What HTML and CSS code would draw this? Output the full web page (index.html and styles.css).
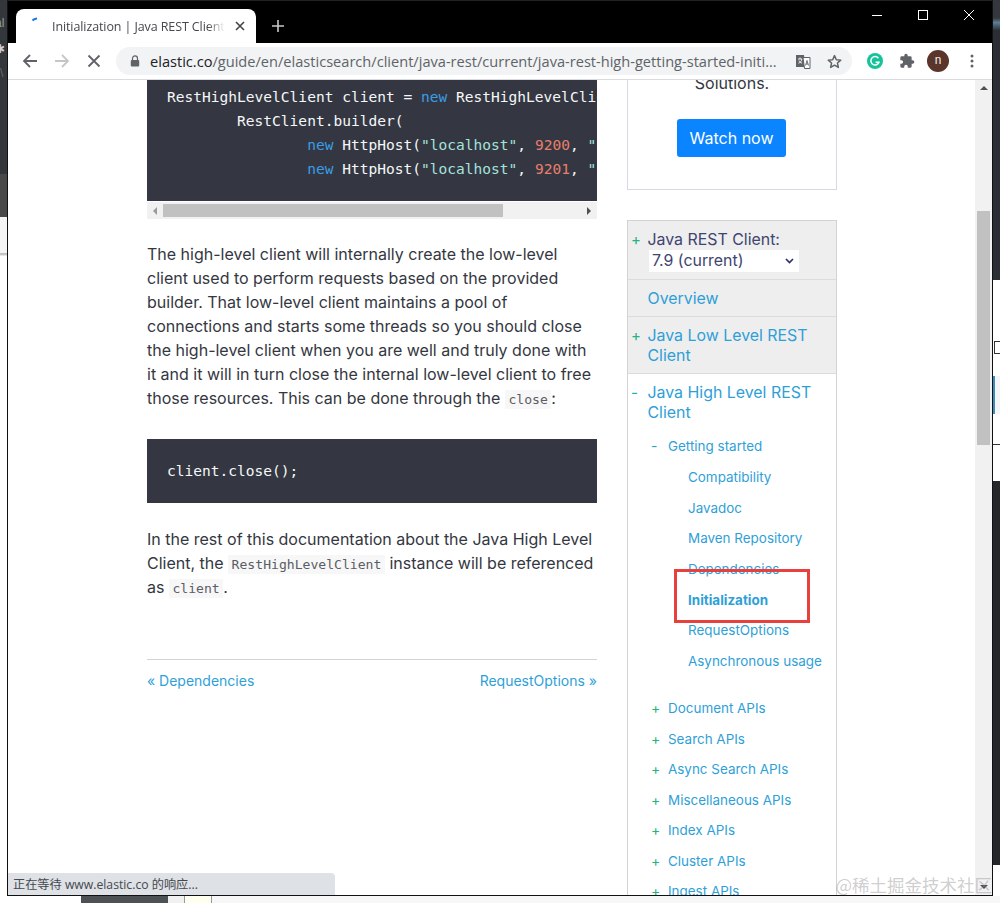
FILE: index.html
```html
<!DOCTYPE html>
<html lang="en">
<head>
<meta charset="utf-8">
<title>Initialization | Java REST Client</title>
<link rel="stylesheet" href="styles.css">
</head>
<body>
<div class="desktop">
  <div class="side side-left">
    <div class="sl-a"><span>al</span><span class="sl-mark">✱</span><span class="sl-slash">\</span></div>
    <div class="sl-b"></div>
    <div class="sl-c"></div>
  </div>
  <div class="window">
    <div class="tabstrip">
      <div class="tab">
        <svg class="tab-spin" width="16" height="16" viewBox="0 0 16 16"><path d="M9.500 5.500Q11 3.800 14 3.500" fill="none" stroke="#1a73e8" stroke-width="2"/></svg>
        <span class="tab-title">Initialization | Java REST Client</span>
        <svg class="tab-x" width="10" height="10" viewBox="0 0 10 10"><path d="M1 1 9 9M9 1 1 9" stroke="#444" stroke-width="1.6"/></svg>
      </div>
      <svg class="newtab" width="12" height="12" viewBox="0 0 12 12"><path d="M6 0V12M0 6H12" stroke="#c8c8c8" stroke-width="1.6"/></svg>
      <div class="winctl">
        <svg width="12" height="12" viewBox="0 0 12 12"><path d="M1 6.5H11" stroke="#fff" stroke-width="1"/></svg>
        <svg width="12" height="12" viewBox="0 0 12 12"><rect x="1.5" y="1.5" width="9" height="9" fill="none" stroke="#fff" stroke-width="1"/></svg>
        <svg width="12" height="12" viewBox="0 0 12 12"><path d="M1 1 11 11M11 1 1 11" stroke="#fff" stroke-width="1"/></svg>
      </div>
    </div>
    <div class="toolbar">
      <svg class="nav-ic" width="16" height="16" viewBox="0 0 16 16"><path d="M15 8H2M8 2 2 8l6 6" fill="none" stroke="#5f6368" stroke-width="1.8"/></svg>
      <svg class="nav-ic" width="16" height="16" viewBox="0 0 16 16"><path d="M1 8H14M8 2l6 6-6 6" fill="none" stroke="#c4c7c9" stroke-width="1.8"/></svg>
      <svg class="nav-ic" width="16" height="16" viewBox="0 0 16 16"><path d="M2.5 2.5 13.5 13.5M13.5 2.5 2.5 13.5" fill="none" stroke="#5f6368" stroke-width="1.8"/></svg>
      <div class="omnibox">
        <svg class="lock" width="10" height="12" viewBox="0 0 10 12"><path d="M2.5 5V3.4a2.5 2.5 0 0 1 5 0V5" fill="none" stroke="#5f6368" stroke-width="1.2"/><rect x=".8" y="5" width="8.4" height="6.6" rx="1" fill="#5f6368"/></svg>
        <span class="url"><span class="url-host">elastic.co</span>/guide/en/elasticsearch/client/java-rest/current/java-rest-high-getting-started-initi...</span>
        <svg class="translate" width="16" height="15" viewBox="0 0 16 15"><path d="M1 1h8l1.5 12H1z" fill="#5f6368"/><path d="M8 3.5h7v11H9.5z" fill="#fff" stroke="#5f6368"/><path d="M3 5h4M5 3.5V5M3.5 9c2 0 3-2 3.4-4M4 6.5c.6 1.3 1.5 2.2 3 2.7" fill="none" stroke="#fff" stroke-width=".9"/><path d="M10.5 11.5l1.5-5 1.5 5M11 10h2" fill="none" stroke="#5f6368" stroke-width=".9"/></svg>
        <svg class="star" width="15" height="15" viewBox="0 0 24 24"><path d="M12 2.6l2.9 6.5 7.1.7-5.3 4.7 1.5 7-6.2-3.6-6.2 3.6 1.5-7L2 9.8l7.1-.7z" fill="none" stroke="#5f6368" stroke-width="2.4" stroke-linejoin="round"/></svg>
      </div>
      <svg class="ext-g" width="16" height="16" viewBox="0 0 16 16"><circle cx="8" cy="8" r="8" fill="#15c39a"/><path d="M11.4 5.2A4.2 4.2 0 1 0 12 9.2H8.6" fill="none" stroke="#fff" stroke-width="1.5"/></svg>
      <svg class="ext-p" width="16" height="16" viewBox="0 0 24 24"><path d="M20.5 11H19V7a2 2 0 0 0-2-2h-4V3.500a2.500 2.500 0 0 0-5 0V5H4a2 2 0 0 0-2 2v3.800h1.500a2.700 2.700 0 0 1 0 5.400H2V20a2 2 0 0 0 2 2h3.800v-1.500a2.700 2.700 0 0 1 5.400 0V22H17a2 2 0 0 0 2-2v-4h1.500a2.500 2.500 0 0 0 0-5z" fill="#5f6368"/></svg>
      <div class="avatar">n</div>
      <svg class="menu" width="4" height="14" viewBox="0 0 4 14"><circle cx="2" cy="2" r="1.500" fill="#5f6368"/><circle cx="2" cy="7" r="1.500" fill="#5f6368"/><circle cx="2" cy="12" r="1.500" fill="#5f6368"/></svg>
    </div>
    <div class="viewport">
      <div class="page">
        <main class="content">
          <div class="code-wrap">
            <pre class="code code-long"><code>RestHighLevelClient client = <span class="kw">new</span> RestHighLevelClient(
        RestClient.builder(
                <span class="kw">new</span> HttpHost(<span class="str">"localhost"</span>, <span class="num">9200</span>, <span class="str">"http"</span>),
                <span class="kw">new</span> HttpHost(<span class="str">"localhost"</span>, <span class="num">9201</span>, <span class="str">"http"</span>)));</code></pre>
            <div class="hscroll">
              <span class="arr arr-l"></span>
              <span class="hthumb"></span>
              <span class="arr arr-r"></span>
            </div>
          </div>
          <p class="para para-a">The high-level client will internally create the low-level client used to perform requests based on the provided builder. That low-level client maintains a pool of connections and starts some threads so you should close the high-level client when you are well and truly done with it and it will in turn close the internal low-level client to free those resources. This can be done through the <code class="lit">close</code>:</p>
          <pre class="code code-short"><code>client.close();</code></pre>
          <p class="para">In the rest of this documentation about the Java High Level Client, the <code class="lit">RestHighLevelClient</code> instance will be referenced as <code class="lit">client</code>.</p>
          <div class="pager">
            <a class="link">« Dependencies</a>
            <a class="link">RequestOptions »</a>
          </div>
        </main>
        <aside class="sidebar">
          <div class="promo">
            <p class="promo-text">Solutions.</p>
            <a class="watch">Watch now</a>
          </div>
          <nav class="toc">
            <div class="toc-sec toc-first">
              <div class="row"><span class="sign plus">+</span><span class="lbl-dark">Java REST Client:</span></div>
              <div class="version"><span>7.9 (current)</span><svg width="9" height="6" viewBox="0 0 9 6"><path d="M1 1l3.500 3.500L8 1" fill="none" stroke="#2b2e6e" stroke-width="1.700"/></svg></div>
            </div>
            <div class="toc-sec toc-over"><div class="row"><span class="sign"></span><a class="link">Overview</a></div></div>
            <div class="toc-sec toc-low"><div class="row"><span class="sign plus">+</span><a class="link">Java Low Level REST Client</a></div></div>
            <div class="toc-open">
              <div class="row"><span class="sign minus">-</span><a class="link">Java High Level REST Client</a></div>
              <ul class="lv2">
                <li><span class="sign2 minus">-</span><a class="link">Getting started</a></li>
              </ul>
              <ul class="lv3">
                <li><a class="link">Compatibility</a></li>
                <li><a class="link">Javadoc</a></li>
                <li><a class="link">Maven Repository</a></li>
                <li><a class="link">Dependencies</a></li>
                <li><a class="link strong">Initialization</a></li>
                <li><a class="link">RequestOptions</a></li>
                <li><a class="link">Asynchronous usage</a></li>
              </ul>
              <ul class="lv2 lv2-rest">
                <li><span class="sign2 plus">+</span><a class="link">Document APIs</a></li>
                <li><span class="sign2 plus">+</span><a class="link">Search APIs</a></li>
                <li><span class="sign2 plus">+</span><a class="link">Async Search APIs</a></li>
                <li><span class="sign2 plus">+</span><a class="link">Miscellaneous APIs</a></li>
                <li><span class="sign2 plus">+</span><a class="link">Index APIs</a></li>
                <li><span class="sign2 plus">+</span><a class="link">Cluster APIs</a></li>
                <li><span class="sign2 plus">+</span><a class="link">Ingest APIs</a></li>
              </ul>
            </div>
          </nav>
        </aside>
      </div>
      <div class="vscroll">
        <span class="varr"></span>
        <span class="vthumb"></span>
        <span class="varr-down"></span>
      </div>
      <div class="redbox"></div>
      <div class="status">正在等待 www.elastic.co 的响应...</div>
      <div class="watermark">@稀土掘金技术社区</div>
    </div>
  </div>
  <div class="side side-right">
    <div class="sr-a"></div>
    <div class="sr-b"></div>
    <div class="sr-c">
      <span class="sr-box"></span>
      <span class="sr-band"></span>
      <span class="sr-line"></span>
    </div>
    <div class="sr-d"></div>
    <div class="sr-e"></div>
  </div>
  <div class="taskstrip">
    <span class="ts-a"></span><span class="ts-b"></span><span class="ts-c"></span><span class="ts-d"></span><span class="ts-e"></span>
  </div>
</div>
</body>
</html>
```
FILE: styles.css
```css
* { box-sizing: border-box; }
html, body { margin: 0; padding: 0; }
body { width: 1000px; height: 903px; overflow: hidden; background: #fff; font-family: Inter, "Noto Sans CJK SC", sans-serif; }
a { text-decoration: none; }
.desktop { display: grid; grid-template-columns: 7px 986px 7px; grid-template-rows: 896px 7px; width: 1000px; height: 903px; }

/* strips of the desktop behind the window */
.side { display: flex; flex-direction: column; overflow: hidden; }
.sl-a { height: 174px; background: #33373c; color: #9aa; font: 12px "Liberation Sans", sans-serif; display: flex; flex-direction: column; padding-top: 16px; line-height: 14px; gap: 12px; white-space: nowrap; }
.sl-a span:first-child { margin-left: -5px; color: #8fa39b; }
.sl-mark { margin-left: -5px; color: #ccd; }
.sl-slash { color: #666a70; margin-top: -2px; }
.sl-b { height: 43px; background: #4a4949; }
.sl-c { flex: 1; background: linear-gradient(#f5f5f5 36px, #bbb 36px, #ccc 38px, #fff 39px); }
.sr-a { height: 30px; background: linear-gradient(#34373b 60%, #5a7f99 75%, #30343a); }
.sr-b { height: 250px; background: #2b2e32; }
.sr-c { height: 201px; background: #fff; display: flex; flex-direction: column; }
.sr-box { height: 13px; margin: 61px 0 0 1px; border: 1px solid #333; border-right: 0; }
.sr-band { height: 38px; margin-top: 22px; background: #f5f5f5; border-left: 2px solid #3a8fc0; }
.sr-line { height: 1px; margin-top: 30px; background: #333; }
.sr-d { height: 384px; background: #25272a; }
.sr-e { flex: 1; background: #fff; }
.taskstrip { grid-column: 1 / 4; display: flex; background: #f7f7f7; }
.ts-a { width: 81px; background: #fff; }
.ts-b { width: 87px; background: #4e5154; }
.ts-c { width: 17px; background: #f0f0f0; border-right: 1px solid #999; }
.ts-d { width: 27px; background: #fffff0; border-right: 1px solid #999; }
.ts-e { flex: 1; }

/* browser window */
.window { display: flex; flex-direction: column; border: solid #111; border-width: 0 1px 1px; background: #fff; min-height: 0; overflow: hidden; border-top: 1px solid #222; }
.tabstrip { height: 42px; background: #000; display: flex; align-items: flex-end; flex: none; }
.tab { width: 240px; height: 34px; margin-left: 8px; background: #fff; border-radius: 8px 8px 0 0; display: flex; align-items: center; padding: 0 9px 0 7px; }
.tab-spin { flex: none; margin-right: 13px; margin-top: -6px; }
.tab-title { flex: 1; font: 12.500px "Open Sans", "Liberation Sans", sans-serif; color: #45484c; white-space: nowrap; overflow: hidden; margin-top: 0; letter-spacing: -.1px; -webkit-mask-image: linear-gradient(90deg, #000 90%, transparent); mask-image: linear-gradient(90deg, #000 90%, transparent); }
.tab-x { flex: none; margin: -1px 2px 0 10px; }
.newtab { margin: 0 0 11px 16px; }
.winctl { margin-left: auto; display: flex; gap: 34px; align-self: flex-start; margin-top: 8px; padding-right: 17px; }
.winctl svg { display: block; }

.toolbar { height: 37px; flex: none; display: flex; align-items: center; background: #fff; border-bottom: 1px solid #d9dbde; padding-left: 14px; }
.nav-ic { margin-right: 16px; flex: none; }
.nav-ic:nth-child(3) { margin-right: 14px; }
.omnibox { width: 736px; height: 28px; border-radius: 14px; background: #f1f3f4; display: flex; align-items: center; padding-left: 14px; flex: none; }
.lock { flex: none; }
.url { margin-left: 10px; font: 14.600px "Open Sans", "Liberation Sans", sans-serif; color: #5f6368; white-space: nowrap; width: 629px; overflow: hidden; margin-top: -1px; }
.url-host { color: #202124; }
.translate { margin-left: 16px; flex: none; }
.star { margin-left: 16px; flex: none; }
.ext-g { margin-left: 15px; flex: none; }
.ext-p { margin-left: 16px; flex: none; }
.avatar { width: 22px; height: 22px; border-radius: 50%; background: #5b352b; color: #f4e9e4; font: 12px/21px Roboto, sans-serif; text-align: center; margin-left: 12px; flex: none; }
.menu { margin-left: 21px; flex: none; }

.viewport { position: relative; flex: 1; min-height: 0; display: flex; overflow: hidden; }
.page { flex: 1; min-width: 0; display: flex; align-items: flex-start; padding-left: 139px; }
.vscroll { width: 17px; background: #f1f1f1; flex: none; position: relative; display: flex; flex-direction: column; align-items: center; }
.varr { width: 0; height: 0; margin-top: 6px; border: 4px solid transparent; border-top: 0; border-bottom: 4px solid #505050; }
.vthumb { width: 13px; height: 234px; background: #c1c1c1; margin-top: 121px; }
.varr-down { width: 0; height: 0; margin-top: auto; margin-bottom: 6px; border: 4px solid transparent; border-bottom: 0; border-top: 4px solid #505050; }

/* article column */
.content { width: 450px; flex: none; font-size: 16px; color: #343741; }
.code { margin: 0; background: #343741; color: #f5f7fa; font: 14.550px/24px "DejaVu Sans Mono", monospace; overflow: hidden; white-space: pre; }
.code-long { height: 121px; padding: 5px 20px 0; }
.code-short { height: 64px; padding: 20px 20px 0; margin-top: 29px; }
.code code { font: inherit; }
.kw { color: #3a9de6; }
.str { color: #a5e3dd; }
.num { color: #e87f6c; }
.hscroll { height: 17px; background: #f1f1f1; margin-top: 1px; display: flex; align-items: center; padding: 0 6px; }
.hthumb { width: 340px; height: 13px; background: #c1c1c1; margin-left: 6px; }
.arr { width: 0; height: 0; border: 4px solid transparent; }
.arr-l { border-left: 0; border-right: 4px solid #9a9a9a; }
.arr-r { border-right: 0; border-left: 4px solid #505050; margin-left: auto; }
.para { margin: 24px 0 0; line-height: 24px; color: #343741; font-size: 16px; }
.para-a { margin-top: 23px; }
.lit { font: 13.100px "DejaVu Sans Mono", monospace; color: #5a5d66; background: #f7f7f7; padding: 2px 3.500px; }
.pager { display: flex; justify-content: space-between; border-top: 1px solid #d3d3d3; margin-top: 60px; padding-top: 11px; font-size: 14px; line-height: 20px; }
.link { color: #2f9fd8; }

/* sidebar */
.sidebar { width: 210px; margin-left: 30px; flex: none; }
.promo { height: 110px; border: 1px solid #d3dae6; border-top: 0; display: flex; flex-direction: column; align-items: center; }
.promo-text { margin: -8px 0 0; line-height: 22px; font-size: 16px; color: #343741; }
.watch { margin: 25px 1px 0 0; width: 109px; height: 38px; border-radius: 3px; background: #0a84ff; color: #fff; font-size: 16px; line-height: 38px; text-align: center; }
.toc { margin-top: 30px; border: 1px solid #d3d3d3; border-bottom: 0; font-size: 15.900px; line-height: 20px; }
.toc-sec { background: #eee; border-bottom: 1px solid #dcdcdc; }
.toc-first { height: 59px; padding-top: 9px; }
.toc-over { height: 37px; padding-top: 9px; }
.toc-low { height: 57px; padding-top: 9px; }
.row { display: flex; }
.sign { width: 19.500px; flex: none; padding-left: 3px; font-size: 15px; }
.plus { color: #24b47e; }
.minus { color: #1fa8c4; }
.lbl-dark { color: #3f4470; }
.version { width: 150px; height: 22px; margin: 0 0 0 21px; background: #fff; color: #3f4470; display: flex; align-items: center; justify-content: space-between; padding: 0 5px 0 3px; line-height: 22px; }
.toc-open { padding-top: 9px; }
.lv2, .lv3 { list-style: none; margin: 0; padding: 0; font-size: 13.450px; line-height: 20px; }
.lv2 { padding-left: 20px; margin-top: 13px; }
.lv2 li { display: flex; height: 30.500px; }
.sign2 { width: 20px; flex: none; padding-left: 3px; font-size: 14px; }
.lv3 { padding-left: 60px; margin-top: .4px; }
.lv3 li { height: 30.700px; white-space: nowrap; }
.lv2-rest { margin-top: 16.600px; }
.strong { font-weight: 700; }

/* overlays */
.redbox { position: absolute; left: 666px; top: 489px; width: 136px; height: 54px; border: 3px solid #e8403c; }
.status { position: absolute; left: 0; bottom: 0; width: 327px; height: 22px; padding: 1px 0 0 5px; background: #dee1e6; border-radius: 0 4px 0 0; font: 12.200px/22px "Open Sans", "Noto Sans CJK SC", sans-serif; color: #45484c; }
.watermark { position: absolute; right: 0; bottom: -2px; font: 17.500px/24px "Noto Sans CJK SC", serif; color: rgba(130,130,130,.4); white-space: nowrap; }
```
